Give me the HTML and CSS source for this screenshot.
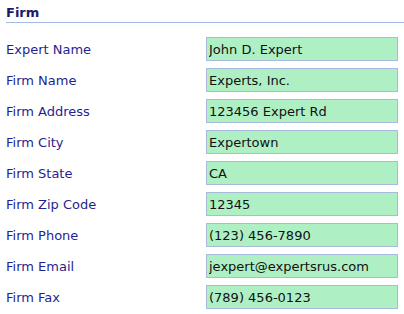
FILE: index.html
```html
<!DOCTYPE html>
<html lang="en">
<head>
    <meta charset="UTF-8">
    <title>Firm</title>
    <link rel="stylesheet" href="styles.css">
</head>
<body>
    <div class="section">
        <h2 class="section-title">Firm</h2>
        <form class="firm-form">
            <div class="row">
                <label for="expertName">Expert Name</label>
                <input type="text" id="expertName" value="John D. Expert">
            </div>
            <div class="row">
                <label for="firmName">Firm Name</label>
                <input type="text" id="firmName" value="Experts, Inc.">
            </div>
            <div class="row">
                <label for="firmAddress">Firm Address</label>
                <input type="text" id="firmAddress" value="123456 Expert Rd">
            </div>
            <div class="row">
                <label for="firmCity">Firm City</label>
                <input type="text" id="firmCity" value="Expertown">
            </div>
            <div class="row">
                <label for="firmState">Firm State</label>
                <input type="text" id="firmState" value="CA">
            </div>
            <div class="row">
                <label for="firmZip">Firm Zip Code</label>
                <input type="text" id="firmZip" value="12345">
            </div>
            <div class="row">
                <label for="firmPhone">Firm Phone</label>
                <input type="text" id="firmPhone" value="(123) 456-7890">
            </div>
            <div class="row">
                <label for="firmEmail">Firm Email</label>
                <input type="text" id="firmEmail" value="jexpert@expertsrus.com">
            </div>
            <div class="row">
                <label for="firmFax">Firm Fax</label>
                <input type="text" id="firmFax" value="(789) 456-0123">
            </div>
        </form>
    </div>
</body>
</html>
```

FILE: styles.css
```css
body {
    margin: 0;
    padding: 0;
    background: #ffffff;
    font-family: "DejaVu Sans", Verdana, sans-serif;
    font-size: 13px;
}

.section {
    padding: 6px 0 0 6px;
}

.section-title {
    margin: 0;
    font-size: 13px;
    font-weight: bold;
    color: #1b1b6b;
    line-height: 14px;
    padding-bottom: 2px;
    border-bottom: 1px solid #a3bbe0;
}

.firm-form {
    display: flex;
    flex-direction: column;
    gap: 7px;
    padding-top: 14px;
}

.row {
    display: flex;
    align-items: center;
}

label {
    width: 200px;
    color: #1f1f8f;
}

input {
    box-sizing: border-box;
    width: 192px;
    height: 24px;
    margin: 0;
    padding: 0 2px;
    font-family: inherit;
    font-size: 13px;
    color: #111111;
    background: #aef0c4;
    border: 1px solid #a9bbdc;
    border-radius: 0;
    outline: none;
}
```
